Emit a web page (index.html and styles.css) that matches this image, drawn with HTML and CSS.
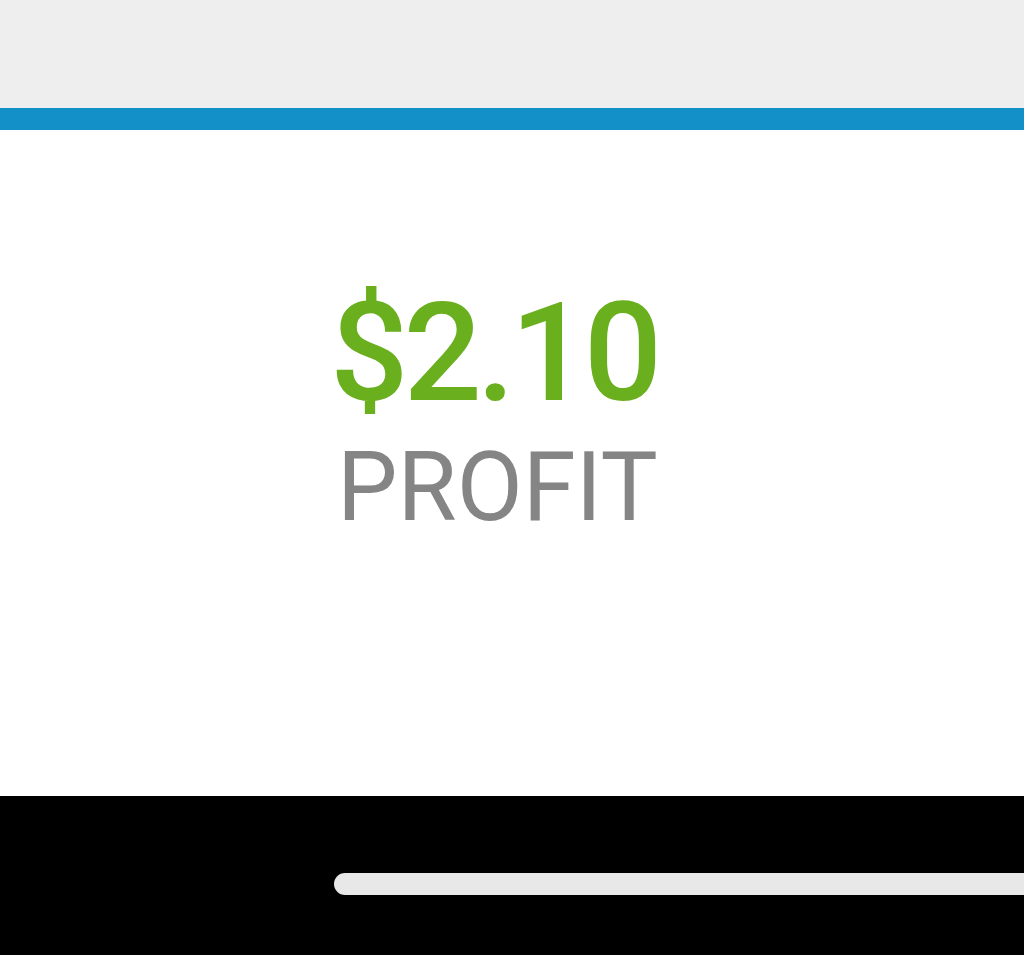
FILE: index.html
```html
<!DOCTYPE html>
<html lang="en">
<head>
  <meta charset="UTF-8" />
  <meta name="viewport" content="width=device-width, initial-scale=1.0"/>
  <title>Profit</title>
  <link rel="stylesheet" href="styles.css">
</head>
<body>
  <div class="topbar"></div>

  <!-- Profit card -->
  <div class="card">
    <div class="stat">
      <div class="amount">$2.10</div>
      <div class="label">PROFIT</div>
    </div>
  </div>

  <div class="navbar">
    <div class="home-indicator"></div>
  </div>
</body>
</html>
```

FILE: styles.css
```css
* {
  box-sizing: border-box;
  margin: 0;
  padding: 0;
}

body {
  width: 1024px;
  height: 955px;
  overflow: hidden;
  display: flex;
  flex-direction: column;
  background-color: #ffffff;
  font-family: Roboto, 'Open Sans', sans-serif;
}

.topbar {
  height: 130px;
  background-color: #eeeeee;
  border-bottom: 22px solid #1490c8;
  flex: none;
}

.card {
  flex: 1;
  background-color: #fff;
  padding-top: 153px;
  padding-left: 330px;
}

.amount {
  color: #6aaf1e;
  font-size: 138px;
  font-weight: 500;
  line-height: 140px;
  letter-spacing: -5px;
}

.label {
  color: #858585;
  font-size: 96px;
  line-height: 96px;
  margin-top: 16px;
  padding-left: 7px;
}

.navbar {
  height: 159px;
  background-color: #000;
  flex: none;
  padding-top: 77px;
  padding-left: 334px;
}

.home-indicator {
  height: 22px;
  background-color: #e8e8e8;
  border-radius: 11px 0 0 11px;
}
```
